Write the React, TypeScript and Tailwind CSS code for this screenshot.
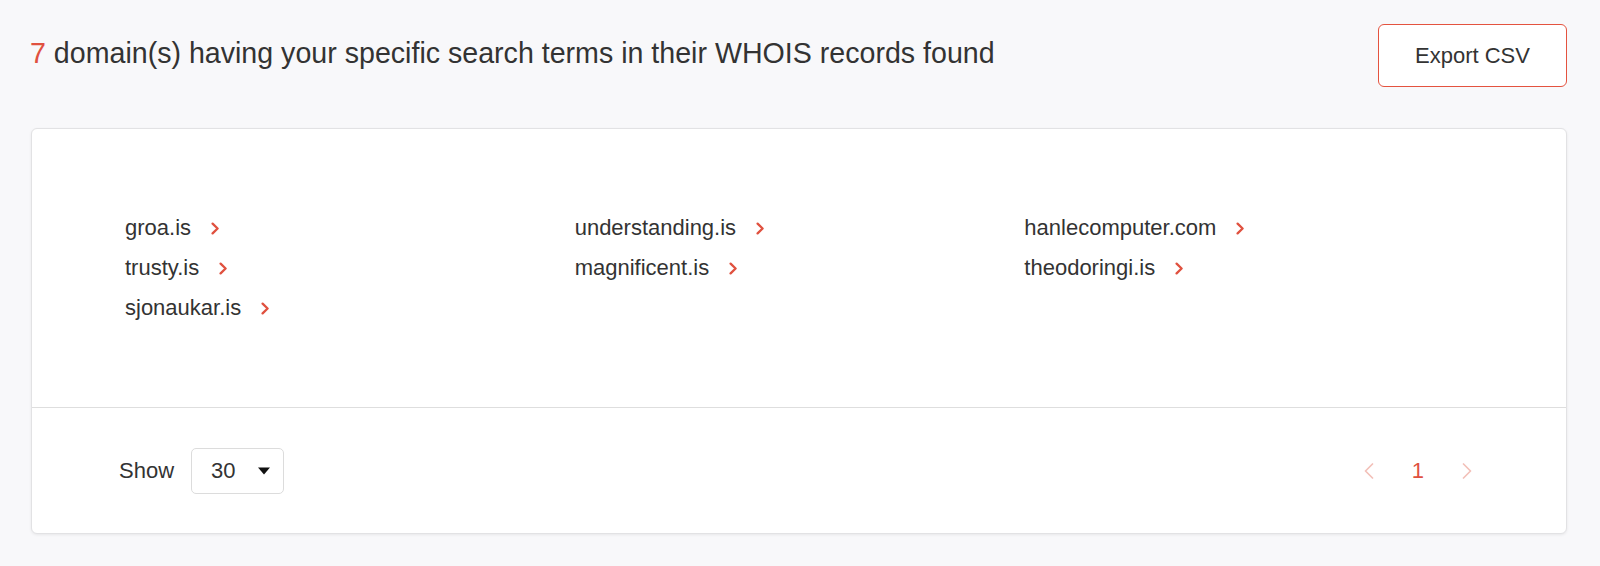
import React from "react";

const domains = [
  "groa.is",
  "understanding.is",
  "hanlecomputer.com",
  "trusty.is",
  "magnificent.is",
  "theodoringi.is",
  "sjonaukar.is",
];

function Chevron({ className = "" }: { className?: string }) {
  return (
    <svg width="9" height="13" viewBox="0 0 9 13" className={className} fill="none">
      <path d="M1.6 1.6L6.6 6.5L1.6 11.4" stroke="currentColor" strokeWidth="2.3" strokeLinecap="round" strokeLinejoin="round" />
    </svg>
  );
}

function ChevronLeft({ className = "" }: { className?: string }) {
  return (
    <svg width="10" height="16" viewBox="0 0 10 16" className={className} fill="none">
      <path d="M8.5 1L1.5 8L8.5 15" stroke="currentColor" strokeWidth="1.7" strokeLinecap="round" strokeLinejoin="round" />
    </svg>
  );
}

function ChevronRight({ className = "" }: { className?: string }) {
  return (
    <svg width="10" height="16" viewBox="0 0 10 16" className={className} fill="none">
      <path d="M1.5 1L8.5 8L1.5 15" stroke="currentColor" strokeWidth="1.7" strokeLinecap="round" strokeLinejoin="round" />
    </svg>
  );
}

export default function App() {
  return (
    <div
      className="min-h-[566px] w-full bg-[#f8f8fa] text-[#333333]"
      style={{ fontFamily: '"Liberation Sans", Arial, sans-serif' }}
    >
      <div className="pl-[31px] pr-[33px] pt-[24px] pb-[33px]">
        <div className="flex items-center justify-between h-[63px] mb-[41px]">
          <h1 className="text-[28.6px] font-normal leading-none -ml-[1px] pb-[4px]">
            <span className="text-[#e0513f]">7</span> domain(s) having your specific search terms in their WHOIS records found
          </h1>
          <button className="h-[63px] w-[189px] rounded-[6px] border border-[#e4533f] bg-white text-[22px] text-[#333333]">
            Export CSV
          </button>
        </div>
        <div className="w-[1536px] rounded-[6px] border border-[#e2e2e4] bg-white shadow-[0_1px_3px_rgba(0,0,0,0.07)]">
          <div className="h-[279px] pl-[93px] pr-[92px] pt-[79px] border-b border-[#dedede]">
            <div className="grid grid-cols-3">
              {domains.map((d) => (
                <div key={d} className="flex items-center h-[40px]">
                  <span className="text-[22px] leading-[40px] text-[#333333]">{d}</span>
                  <Chevron className="ml-[20px] mt-[1px] text-[#e0513f]" />
                </div>
              ))}
            </div>
          </div>
          <div className="h-[125px] flex items-center justify-between pl-[87px] pr-[94px]">
            <div className="flex items-center">
              <span className="text-[22px] mr-[17px]">Show</span>
              <div className="flex items-center justify-between h-[46px] w-[93px] rounded-[5px] border border-[#dcdcdc] pl-[19px] pr-[13px]">
                <span className="text-[22px]">30</span>
                <svg width="12" height="8" viewBox="0 0 12 8">
                  <path d="M0 0.5H12L6 7.5Z" fill="#111111" />
                </svg>
              </div>
            </div>
            <div className="flex items-center gap-[38px]">
              <ChevronLeft className="text-[#f3c0b9]" />
              <span className="text-[22px] text-[#e0513f]">1</span>
              <ChevronRight className="text-[#f3c0b9]" />
            </div>
          </div>
        </div>
      </div>
    </div>
  );
}
